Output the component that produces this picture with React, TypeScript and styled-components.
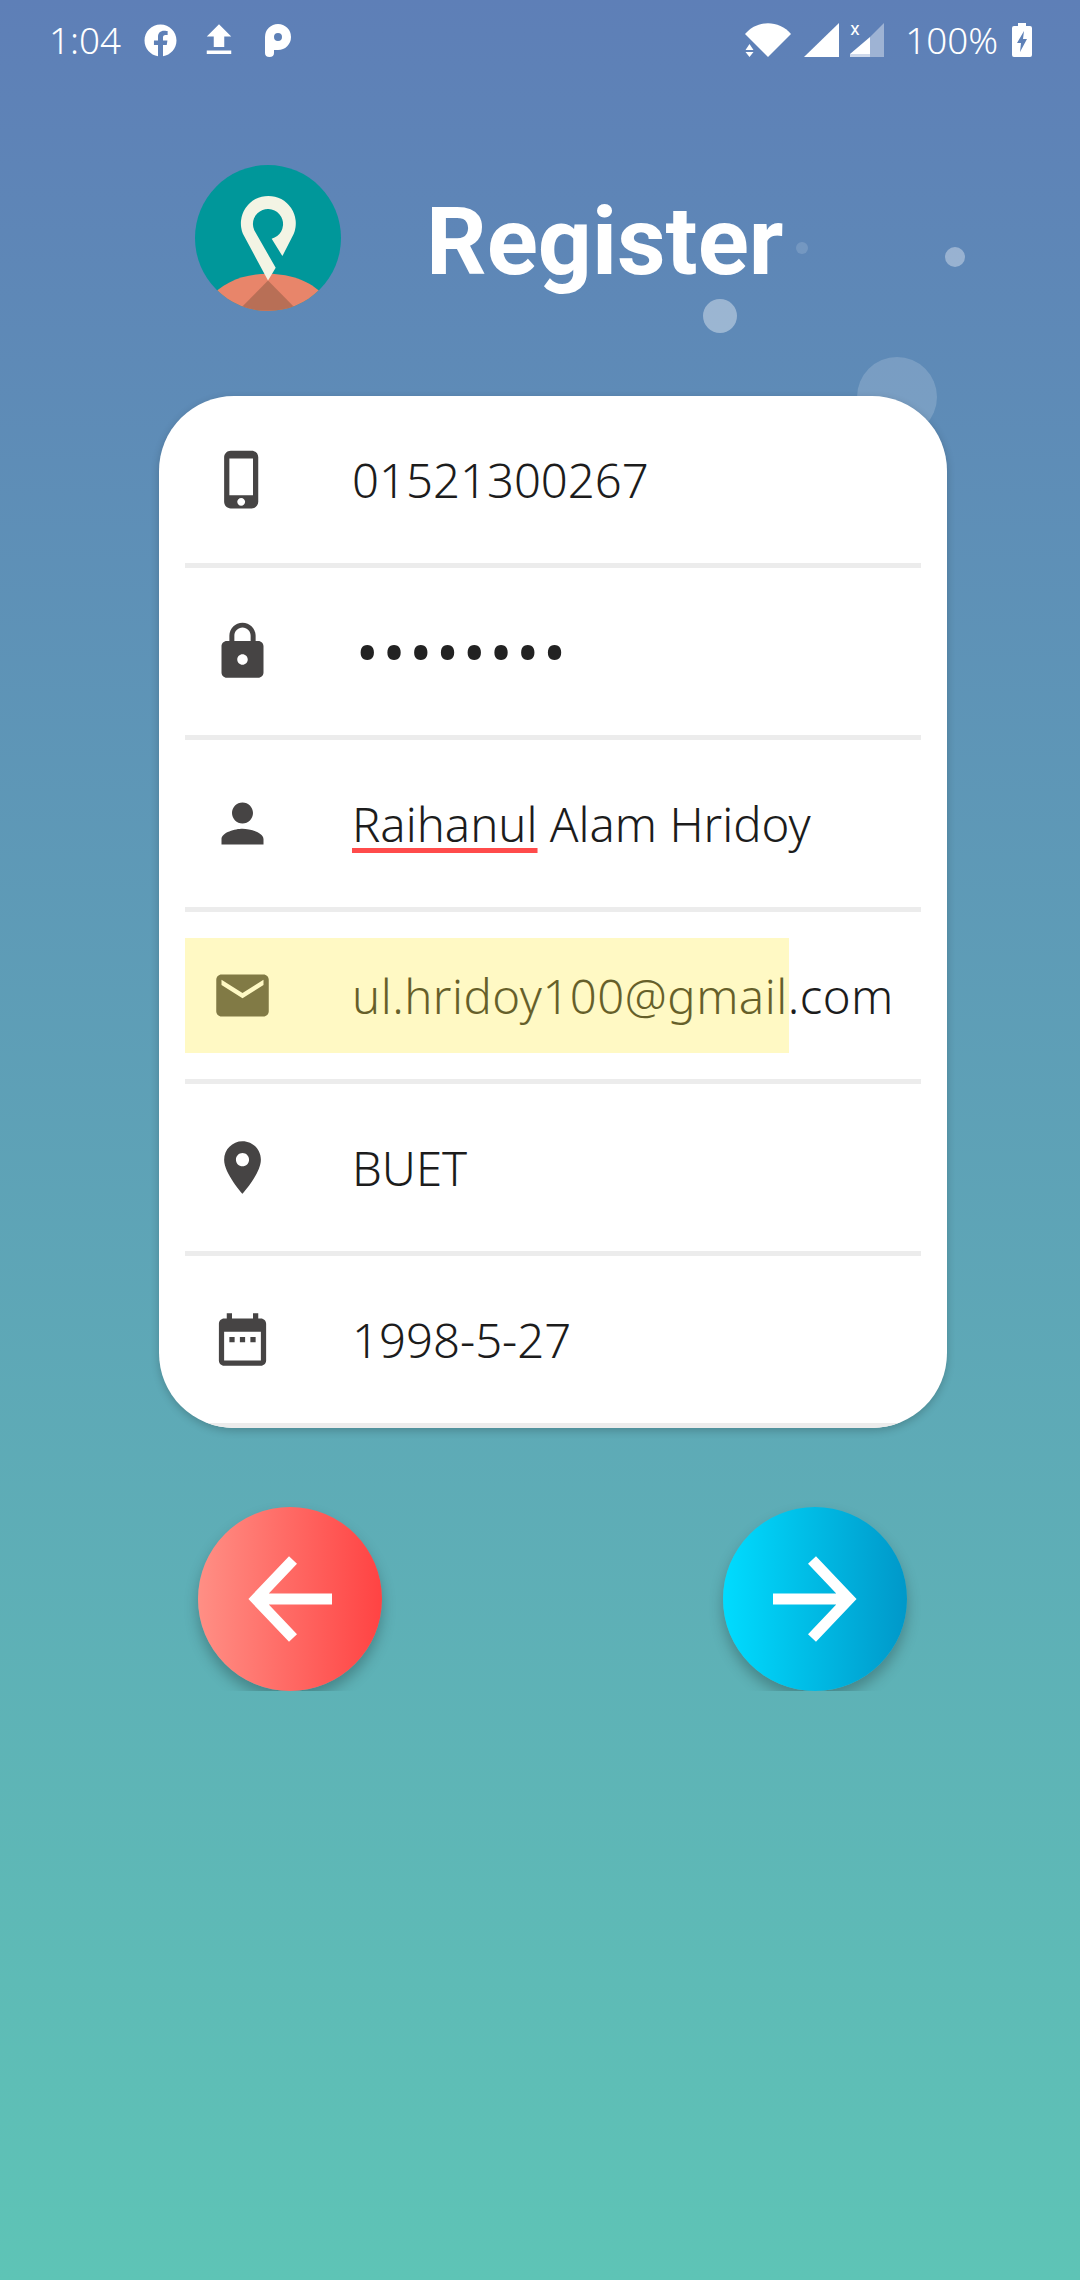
import React from "react";
import styled, { createGlobalStyle } from "styled-components";
import { FaFacebook } from "react-icons/fa";

const paths = {
    phone: "M15.5 1h-8C6.12 1 5 2.12 5 3.5v17C5 21.88 6.12 23 7.5 23h8c1.38 0 2.5-1.12 2.5-2.5v-17C18 2.12 16.88 1 15.5 1zm-4 21c-.83 0-1.5-.67-1.5-1.5s.67-1.5 1.5-1.5 1.5.67 1.5 1.5-.67 1.5-1.5 1.5zm4.5-4H7V4h9v14z",
    lock: "M18 8h-1V6c0-2.76-2.24-5-5-5S7 3.24 7 6v2H6c-1.1 0-2 .9-2 2v10c0 1.1.9 2 2 2h12c1.1 0 2-.9 2-2V10c0-1.1-.9-2-2-2zm-6 9c-1.1 0-2-.9-2-2s.9-2 2-2 2 .9 2 2-.9 2-2 2zm3.1-9H8.9V6c0-1.71 1.39-3.1 3.1-3.1 1.71 0 3.1 1.39 3.1 3.1v2z",
    person: "M12 12c2.21 0 4-1.79 4-4s-1.79-4-4-4-4 1.79-4 4 1.79 4 4 4zm0 2c-2.67 0-8 1.34-8 4v2h16v-2c0-2.66-5.33-4-8-4z",
    email: "M20 4H4c-1.1 0-1.99.9-1.99 2L2 18c0 1.1.9 2 2 2h16c1.1 0 2-.9 2-2V6c0-1.1-.9-2-2-2zm0 4l-8 5-8-5V6l8 5 8-5v2z",
    place: "M12 2C8.13 2 5 5.13 5 9c0 5.25 7 13 7 13s7-7.75 7-13c0-3.87-3.13-7-7-7zm0 9.5c-1.38 0-2.5-1.12-2.5-2.5s1.12-2.5 2.5-2.5 2.5 1.12 2.5 2.5-1.12 2.5-2.5 2.5z",
    calendar: "M9 11H7v2h2v-2zm4 0h-2v2h2v-2zm4 0h-2v2h2v-2zm2-7h-1V2h-2v2H8V2H6v2H5c-1.11 0-1.99.9-1.99 2L3 20c0 1.1.89 2 2 2h14c1.1 0 2-.9 2-2V6c0-1.1-.9-2-2-2zm0 16H5V9h14v11z",
};

const FieldIcon = ({ d }: { d: string }) => (
    <IconSvg viewBox="0 0 24 24">
        <path d={d} />
    </IconSvg>
);

const Logo = () => (
    <LogoSvg viewBox="76 75 436 436">
        <defs>
            <clipPath id="logoClip">
                <circle cx="294" cy="293" r="218" />
            </clipPath>
        </defs>
        <circle cx="294" cy="293" r="218" fill="#00979a" />
        <g clipPath="url(#logoClip)">
            <path d="M120 475 C 190 375 398 375 468 475 L468 520 L120 520 Z" fill="#e8856a" />
            <path d="M294 420 L205 510 L383 510 Z" fill="#b86f56" />
        </g>
        <path
            d="M294 420 L219 280 A82 82 0 1 1 371 280 L337 347 L305 295 A45 45 0 1 0 253 270 L317 382 Z"
            fill="#f3f4e4"
        />
    </LogoSvg>
);

const StatusIcons = () => (
    <>
        <svg width="46" height="34" viewBox="0 0 46 34" fill="#fff">
            <path d="M0 11 C12 -3.5 34 -3.5 46 11 L23 34 Z" />
            <path d="M4.5 21 L8.5 27 L0.5 27 Z M0.5 29 L8.5 29 L4.5 34 Z" />
        </svg>
        <SignalSvg width="35" height="34" viewBox="0 0 35 34" fill="#fff">
            <path d="M0 34 L35 0 L35 34 Z" />
        </SignalSvg>
        <SimSlot>
            <SimLabel>x</SimLabel>
            <svg width="34" height="34" viewBox="0 0 34 34" fill="#fff">
                <path d="M20 14 L34 0 L34 34 L20 34 Z" opacity="0.4" />
                <path d="M0 31 L20 14 L20 31 Z" />
                <path d="M0 31 L20 31 L20 34 L0 34 Z" opacity="0.7" />
            </svg>
        </SimSlot>
        <BatteryText>100%</BatteryText>
        <svg width="20" height="34" viewBox="0 0 20 34" fill="#fff">
            <path
                fillRule="evenodd"
                d="M6 0 H14 V3 H18 Q20 3 20 5 V32 Q20 34 18 34 H2 Q0 34 0 32 V5 Q0 3 2 3 H6 Z M12 8 L5 20 H9 L8 29 L15 16 H11 Z"
            />
        </svg>
    </>
);

const BackArrow = () => (
    <ArrowSvg viewBox="0 0 84 84">
        <path d="M84 42 H8 M45 3 L8 42 L45 81" />
    </ArrowSvg>
);

const NextArrow = () => (
    <ArrowSvg viewBox="0 0 84 84">
        <path d="M0 42 H76 M39 3 L76 42 L39 81" />
    </ArrowSvg>
);

export default function App() {
    return (
        <Screen>
            <GlobalStyle />
            <Bubble $x={796} $y={242} $size={12} $alpha={0.14} />
            <Bubble $x={945} $y={247} $size={20} $alpha={0.36} />
            <Bubble $x={703} $y={299} $size={34} $alpha={0.38} />
            <Bubble $x={857} $y={357} $size={80} $alpha={0.17} />

            <StatusBar>
                <StatusGroup>
                    <Clock>1:04</Clock>
                    <FaFacebook size={33} color="#fff" />
                    <UploadSvg viewBox="0 0 24 24" fill="#fff">
                        <path d="M9 16h6v-6h4l-7-7-7 7h4zm-4 2h14v2H5z" />
                    </UploadSvg>
                    <svg width="26" height="33" viewBox="0 0 26 33" fill="#fff">
                        <path
                            fillRule="evenodd"
                            d="M13 0 A13 13 0 0 1 13 26 H9 V29 Q9 33 4.5 33 Q0 33 0 29 V13 A13 13 0 0 1 13 0 Z M13 9 A4 4 0 1 0 13 17 A4 4 0 1 0 13 9 Z"
                        />
                    </svg>
                </StatusGroup>
                <StatusGroup>
                    <StatusIcons />
                </StatusGroup>
            </StatusBar>

            <Header>
                <Logo />
                <Title>Register</Title>
            </Header>

            <Card>
                <Row>
                    <FieldIcon d={paths.phone} />
                    <Value>01521300267</Value>
                </Row>
                <Row>
                    <FieldIcon d={paths.lock} />
                    <Dots>••••••••</Dots>
                </Row>
                <Row>
                    <FieldIcon d={paths.person} />
                    <Value>
                        <Misspelled>Raihanul</Misspelled> Alam Hridoy
                    </Value>
                </Row>
                <Row>
                    <FieldIcon d={paths.email} />
                    <EmailValue>ul.hridoy100@gmail.com</EmailValue>
                    <Autofill />
                </Row>
                <Row>
                    <FieldIcon d={paths.place} />
                    <Value>BUET</Value>
                </Row>
                <Row>
                    <FieldIcon d={paths.calendar} />
                    <Value>1998-5-27</Value>
                </Row>
            </Card>

            <ButtonRow>
                <RoundButton $from="#ff8f85" $to="#ff4343">
                    <BackArrow />
                </RoundButton>
                <RoundButton $from="#00dcff" $to="#0098c9">
                    <NextArrow />
                </RoundButton>
            </ButtonRow>
        </Screen>
    );
}

const GlobalStyle = createGlobalStyle`
    html, body {
        margin: 0;
        padding: 0;
    }
    * {
        box-sizing: border-box;
    }
`;

const Screen = styled.div`
    position: relative;
    width: 1080px;
    height: 2280px;
    overflow: hidden;
    background: linear-gradient(180deg, #5e7fb7 0%, #5ec4b6 100%);
    font-family: "Noto Sans", "Open Sans", sans-serif;
`;

const Bubble: any = styled.div<{ $x: number; $y: number; $size: number; $alpha: number }>`
    position: absolute;
    left: ${(p) => p.$x}px;
    top: ${(p) => p.$y}px;
    width: ${(p) => p.$size}px;
    height: ${(p) => p.$size}px;
    border-radius: 50%;
    background: rgba(255, 255, 255, ${(p) => p.$alpha});
`;

const StatusBar = styled.div`
    position: relative;
    height: 80px;
    padding: 0 48px 0 49px;
    display: flex;
    justify-content: space-between;
    align-items: center;
    color: #fff;
`;

const StatusGroup = styled.div`
    display: flex;
    align-items: center;
`;

const Clock = styled.span`
    font-size: 36.75px;
    font-weight: 300;
    margin-right: 23px;
    line-height: 40px;
`;

const UploadSvg = styled.svg`
    width: 42px;
    height: 42px;
    margin: 0 25px 0 21px;
`;

const SignalSvg = styled.svg`
    margin-left: 13px;
`;

const SimSlot = styled.div`
    position: relative;
    display: flex;
    margin-left: 11px;
`;

const SimLabel = styled.span`
    position: absolute;
    left: 0;
    top: 0;
    font-family: Roboto, sans-serif;
    font-size: 19px;
    line-height: 12px;
`;

const BatteryText = styled.span`
    font-size: 36.75px;
    font-weight: 300;
    margin: 0 14px 0 21px;
    line-height: 40px;
`;

const Header = styled.div`
    position: relative;
    display: flex;
    align-items: center;
    padding: 85px 0 85px 195px;
`;

const LogoSvg = styled.svg`
    width: 146px;
    height: 146px;
    flex: none;
`;

const Title = styled.h1`
    margin: 8px 0 0 85px;
    font-family: Roboto, sans-serif;
    font-size: 94.7px;
    font-weight: 700;
    line-height: 100px;
    color: #fff;
`;

const Card = styled.div`
    position: relative;
    width: 788px;
    height: 1032px;
    margin-left: 159px;
    padding: 0 26px;
    background: #fff;
    border-radius: 75px;
    overflow: hidden;
    box-shadow: 0 3px 8px rgba(0, 0, 0, 0.2);
`;

const Row = styled.div`
    position: relative;
    height: 172px;
    padding-left: 26px;
    display: flex;
    align-items: center;
    border-bottom: 5px solid #ececec;
`;

const IconSvg = styled.svg`
    width: 63px;
    height: 63px;
    flex: none;
    fill: #464444;
`;

const Value = styled.span`
    margin-left: 78px;
    font-size: 47.25px;
    font-weight: 300;
    color: #1c1c1c;
    white-space: nowrap;
`;

const EmailValue = styled(Value)`
    letter-spacing: 0.5px;
`;

const Dots = styled(Value)`
    margin-left: 82px;
    font-size: 60px;
    font-weight: 400;
    line-height: 60px;
    letter-spacing: 4.2px;
    color: #222;
`;

const Misspelled = styled.span`
    text-decoration: underline 5px #ff4b4b;
    text-decoration-skip-ink: none;
    text-underline-offset: 6px;
`;

const Autofill = styled.div`
    position: absolute;
    left: 0;
    top: 26px;
    width: 604px;
    height: 115px;
    background: rgba(255, 237, 70, 0.32);
`;

const ButtonRow = styled.div`
    width: 709px;
    height: 184px;
    margin: 79px 0 0 198px;
    display: flex;
    justify-content: space-between;
    clip-path: inset(-40px -40px 0 -40px);
`;

const RoundButton = styled.button<{ $from: string; $to: string }>`
    width: 184px;
    height: 184px;
    padding: 0;
    border: 0;
    outline: 0;
    border-radius: 50%;
    display: flex;
    align-items: center;
    justify-content: center;
    background: linear-gradient(90deg, ${(p) => p.$from}, ${(p) => p.$to});
    box-shadow: 0 8px 14px rgba(0, 0, 0, 0.25);
`;

const ArrowSvg = styled.svg`
    width: 84px;
    height: 84px;
    fill: none;
    stroke: #fff;
    stroke-width: 11;
    overflow: visible;
`;
